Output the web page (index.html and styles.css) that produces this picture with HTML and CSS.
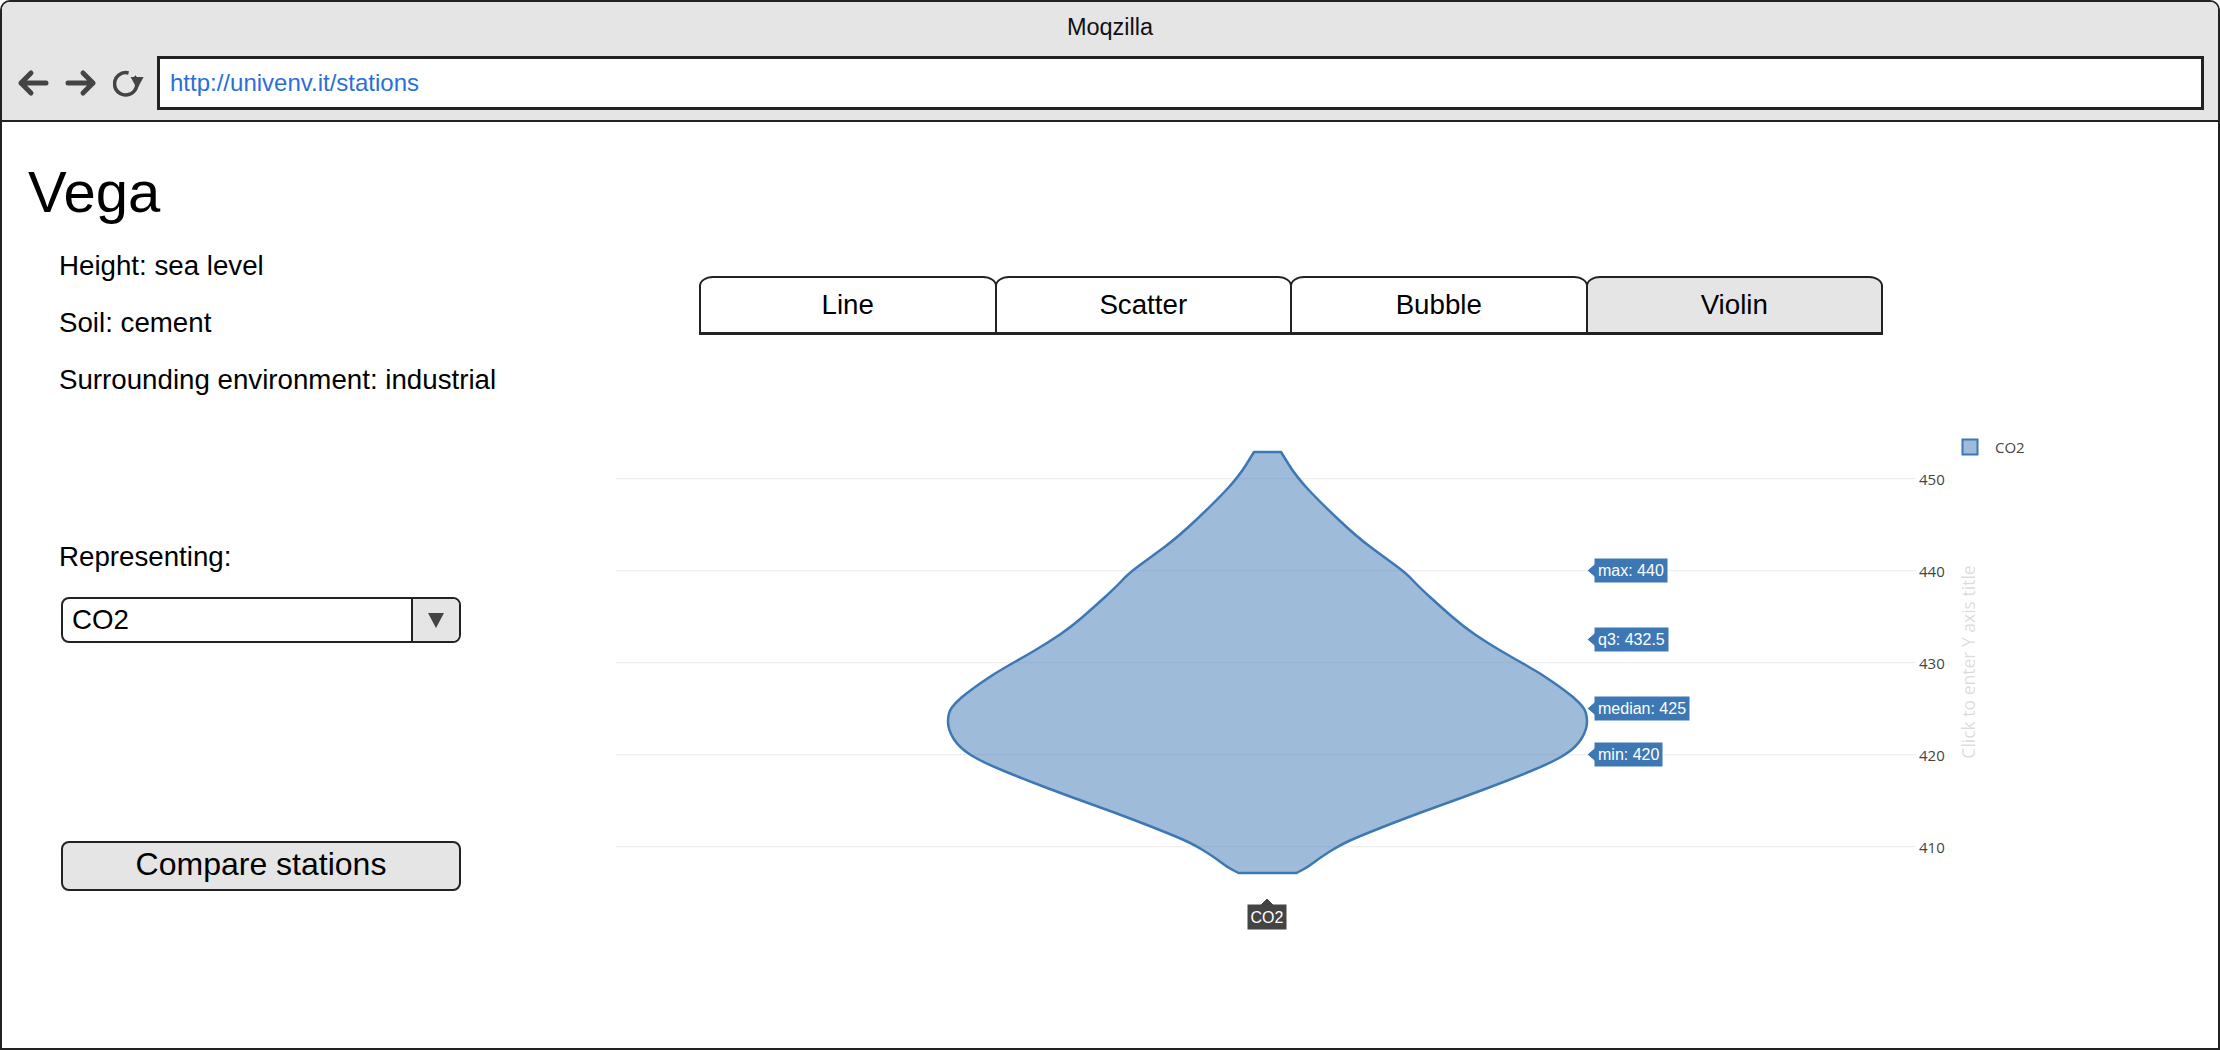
FILE: index.html
```html
<!DOCTYPE html>
<html>
<head>
<meta charset="utf-8">
<title>Moqzilla</title>
<link rel="stylesheet" href="styles.css">
</head>
<body>
<div class="window">
  <header class="chrome">
    <div class="title">Moqzilla</div>
    <div class="navbar">
      <svg class="nav-icon back" viewBox="0 0 32 30"><path d="M29 15H4M14 5L4 15l10 10" fill="none" stroke="#444" stroke-width="5" stroke-linecap="round" stroke-linejoin="round"/></svg>
      <svg class="nav-icon fwd" viewBox="0 0 32 30"><path d="M3 15h25M18 5l10 10-10 10" fill="none" stroke="#444" stroke-width="5" stroke-linecap="round" stroke-linejoin="round"/></svg>
      <svg class="nav-icon reload" viewBox="0 0 31 30"><path d="M15.6 4.9A11.2 11.2 0 1 0 21.3 8.5" fill="none" stroke="#444" stroke-width="3.6"/><path d="M17.6 9H30.6L24.1 21Z" fill="#444"/></svg>
      <div class="address">http://univenv.it/stations</div>
    </div>
  </header>
  <main class="content">
    <aside class="sidebar">
      <h1 class="station-name">Vega</h1>
      <p class="info">Height: sea level</p>
      <p class="info">Soil: cement</p>
      <p class="info">Surrounding environment: industrial</p>
      <p class="field-label">Representing:</p>
      <div class="select">
        <span class="select-value">CO2</span>
        <span class="select-btn"><span class="caret"></span></span>
      </div>
      <button class="compare">Compare stations</button>
    </aside>
    <section class="chart-area">
      <nav class="tabs">
        <div class="tab">Line</div>
        <div class="tab">Scatter</div>
        <div class="tab">Bubble</div>
        <div class="tab active">Violin</div>
      </nav>
      <svg class="plot" viewBox="463 335 1755 713">
        <g class="grid">
          <line x1="616" x2="1916" y1="478.5" y2="478.5"/>
          <line x1="616" x2="1916" y1="570.5" y2="570.5"/>
          <line x1="616" x2="1916" y1="662.5" y2="662.5"/>
          <line x1="616" x2="1916" y1="754.5" y2="754.5"/>
          <line x1="616" x2="1916" y1="846.5" y2="846.5"/>
        </g>
        <g class="ticks">
          <text x="1919" y="478.5">450</text>
          <text x="1919" y="570.5">440</text>
          <text x="1919" y="662.5">430</text>
          <text x="1919" y="754.5">420</text>
          <text x="1919" y="846.5">410</text>
        </g>
        <text class="axis-title" x="1968" y="662" transform="rotate(-90 1968 662)">Click to enter Y axis title</text>
        <g class="legend">
          <rect x="1962.5" y="439.5" width="15" height="15"/>
          <text x="1995" y="447">CO2</text>
        </g>
        <path class="violin" d="M1254 452 L1281 452 L1288.75 464.5 Q1296.5 477 1308.75 490 Q1321 503 1339 520 Q1357 537 1370.5 547 Q1384 557 1395 565 Q1406 573 1412.5 580 Q1419 587 1430.5 597.5 Q1442 608 1453 617.5 Q1464 627 1475 634.5 Q1486 642 1499.5 650 Q1513 658 1526.5 665.5 Q1540 673 1553.5 682.5 Q1567 692 1573.5 697.5 Q1580 703 1583.5 708 Q1587 713 1587 721.5 Q1587 730 1581.25 739 Q1575.5 748 1564.25 755 Q1553 762 1531 771 Q1509 780 1486.5 788.5 Q1464 797 1441.5 805 Q1419 813 1397 821.5 Q1375 830 1359.25 836.5 Q1343.5 843 1332.25 850 Q1321 857 1314.5 862 Q1308 867 1302.25 870 L1296.5 873 L1238.5 873 L1232.75 870 Q1227 867 1220.5 862 Q1214 857 1202.75 850 Q1191.5 843 1175.75 836.5 Q1160 830 1138 821.5 Q1116 813 1093.5 805 Q1071 797 1048.5 788.5 Q1026 780 1004 771 Q982 762 970.75 755 Q959.5 748 953.75 739 Q948 730 948 721.5 Q948 713 951.5 708 Q955 703 961.5 697.5 Q968 692 981.5 682.5 Q995 673 1008.5 665.5 Q1022 658 1035.5 650 Q1049 642 1060 634.5 Q1071 627 1082 617.5 Q1093 608 1104.5 597.5 Q1116 587 1122.5 580 Q1129 573 1140 565 Q1151 557 1164.5 547 Q1178 537 1196 520 Q1214 503 1226.25 490 Q1238.5 477 1246.25 464.5 Z"/>
        <g class="hover">
          <path d="M1587 570.5L1594 564.5V558H1668V583H1594V576.5Z"/>
          <text x="1598" y="570.5">max: 440</text>
          <path d="M1587 639.5L1594 633.5V627H1669V652H1594V645.5Z"/>
          <text x="1598" y="639.5">q3: 432.5</text>
          <path d="M1587 708.5L1594 702.5V696H1690V721H1594V714.5Z"/>
          <text x="1598" y="708.5">median: 425</text>
          <path d="M1587 754.5L1594 748.5V742H1663V767H1594V760.5Z"/>
          <text x="1598" y="754.5">min: 420</text>
        </g>
        <g class="xhover">
          <path d="M1267 898L1273 904H1287V930H1247V904H1261Z"/>
          <text x="1267" y="917">CO2</text>
        </g>
      </svg>
    </section>
  </main>
</div>
</body>
</html>
```

FILE: styles.css
```css
* {
  box-sizing: border-box;
}

html,
body {
  margin: 0;
  padding: 0;
  background: #fff;
}

body {
  font-family: "Liberation Sans", Arial, Helvetica, sans-serif;
  color: #000;
}

.window {
  width: 2220px;
  height: 1050px;
  border: 2px solid #222;
  border-radius: 10px 10px 0 0;
  overflow: hidden;
  display: flex;
  flex-direction: column;
}

/* ---------- browser chrome ---------- */
.chrome {
  flex: none;
  background: #e5e5e5;
  border-bottom: 2px solid #222;
  padding-bottom: 10px;
}

.title {
  height: 50px;
  line-height: 50px;
  text-align: center;
  font-size: 23.5px;
  color: #111;
}

.navbar {
  display: flex;
  align-items: center;
  height: 54px;
  margin-top: 4px;
  padding: 0 14px 0 15px;
}

.nav-icon {
  flex: none;
  display: block;
}

.back {
  width: 32px;
  height: 30px;
}

.fwd {
  width: 32px;
  height: 30px;
  margin-left: 16px;
}

.reload {
  width: 31px;
  height: 30px;
  margin-left: 16px;
}

.address {
  flex: 1;
  height: 54px;
  margin-left: 13px;
  border: 3px solid #222;
  background: #fff;
  color: #2a6fd8;
  font-size: 24px;
  line-height: 48px;
  padding-left: 10px;
}

/* ---------- page content ---------- */
.content {
  flex: 1;
  display: flex;
  min-height: 0;
}

.sidebar {
  flex: none;
  width: 461px;
  padding: 38px 0 0 57px;
}

.station-name {
  margin: 0 0 0 -31px;
  font-size: 58px;
  line-height: 64px;
  font-weight: normal;
}

.info,
.field-label {
  margin: 23px 0 0;
  font-size: 27.7px;
  line-height: 34px;
  white-space: nowrap;
}

.station-name + .info {
  margin-top: 25px;
}

.field-label {
  margin-top: 143px;
}

.select {
  display: flex;
  width: 400px;
  height: 46px;
  margin: 23px 0 0 2px;
  border: 2px solid #222;
  border-radius: 8px;
  overflow: hidden;
  background: #fff;
}

.select-value {
  flex: 1;
  font-size: 27.7px;
  line-height: 42px;
  padding-left: 9px;
}

.select-btn {
  flex: none;
  width: 48px;
  border-left: 2px solid #222;
  background: #e5e5e5;
  display: flex;
  align-items: center;
  justify-content: center;
}

.caret {
  width: 0;
  height: 0;
  border-left: 8.5px solid transparent;
  border-right: 8.5px solid transparent;
  border-top: 15px solid #444;
}

.compare {
  display: block;
  width: 400px;
  height: 50px;
  margin: 198px 0 0 2px;
  padding: 0 0 5px;
  border: 2px solid #222;
  border-radius: 8px;
  background: #e5e5e5;
  font-family: inherit;
  font-size: 32px;
  line-height: 40px;
  color: #000;
}

/* ---------- chart area ---------- */
.chart-area {
  flex: 1;
  display: flex;
  flex-direction: column;
  min-width: 0;
}

.tabs {
  display: flex;
  width: 1184px;
  height: 59px;
  margin: 154px 0 0 236px;
  flex: none;
}

.tab {
  flex: 1 1 0;
  display: flex;
  align-items: center;
  justify-content: center;
  border: 2px solid #222;
  border-bottom-width: 3px;
  border-radius: 14px 14px 0 0 / 10px 10px 0 0;
  background: #fff;
  font-size: 27.7px;
}

.tab + .tab {
  margin-left: -2px;
}

.tab.active {
  background: #e5e5e5;
}

.plot {
  display: block;
  width: 1755px;
  height: 713px;
  flex: none;
  font-family: "Open Sans", Verdana, Arial, sans-serif;
}

.grid line {
  stroke: #eee;
  stroke-width: 1.25;
}

.ticks text {
  font-size: 15px;
  fill: #444;
  dominant-baseline: central;
}

.axis-title {
  font-size: 17.5px;
  fill: #444;
  fill-opacity: 0.2;
  text-anchor: middle;
  dominant-baseline: central;
}

.legend rect {
  fill: rgba(61, 120, 180, 0.5);
  stroke: #3d78b4;
  stroke-width: 2;
}

.legend text {
  font-size: 15px;
  fill: #444;
  dominant-baseline: central;
}

.violin {
  fill: rgba(61, 120, 180, 0.5);
  stroke: #3d78b4;
  stroke-width: 2.5;
  stroke-linejoin: round;
}

.hover path {
  fill: #3d78b4;
  stroke: #fff;
  stroke-width: 1;
}

.hover text {
  font-family: "Liberation Sans", Arial, sans-serif;
  font-size: 16px;
  fill: #fff;
  dominant-baseline: central;
}

.xhover path {
  fill: #444;
  stroke: #fff;
  stroke-width: 1;
}

.xhover text {
  font-family: "Liberation Sans", Arial, sans-serif;
  font-size: 16px;
  fill: #fff;
  text-anchor: middle;
  dominant-baseline: central;
}
```
